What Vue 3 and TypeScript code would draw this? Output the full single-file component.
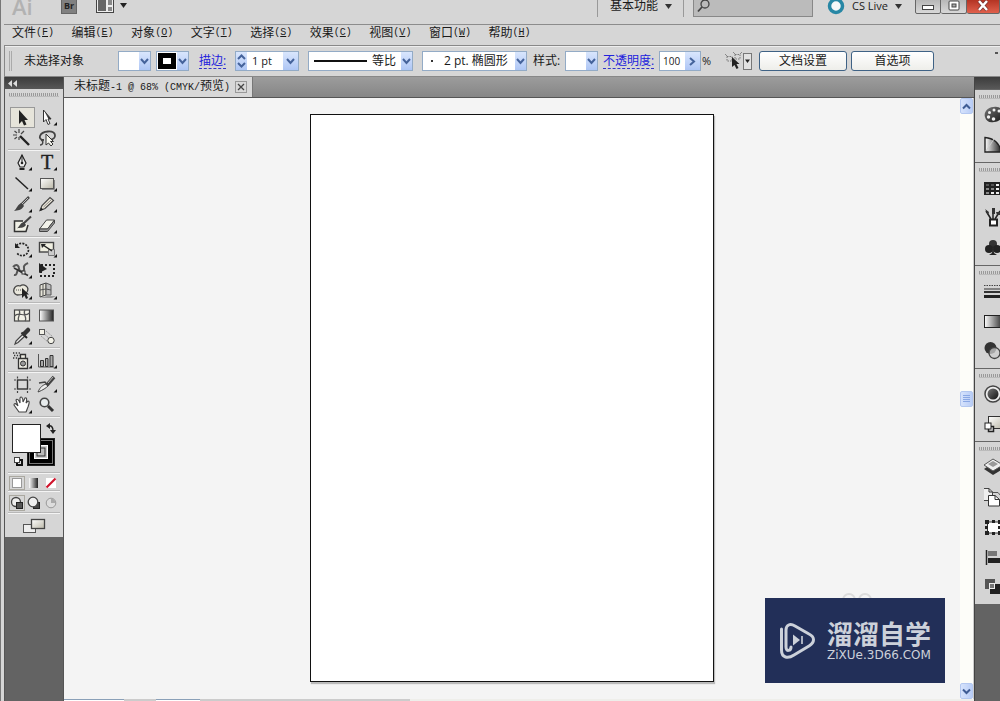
<script setup lang="ts">
import { ref } from 'vue'

interface Tool {
  name: string
  art: string
  more?: boolean
}

const menus = [
  ['文件', 'F'], ['编辑', 'E'], ['对象', 'O'], ['文字', 'T'], ['选择', 'S'],
  ['效果', 'C'], ['视图', 'V'], ['窗口', 'W'], ['帮助', 'H'],
]

const toolGroups: Tool[][] = [
  [
    { name: '选择工具', art: '<path d="M9 3V17L12 14L14 18.500L16.500 17.500L14.500 13H18Z" fill="#222"/>' },
    { name: '直接选择工具', more: true, art: '<path d="M8.500 3V15L11 12.500L13 17.500L15 16.500L13 12H16Z" fill="#fff" stroke="#333"/><path d="M13.500 12H16.500L10 5.500Z" fill="#333"/>' },
    { name: '魔棒工具', art: '<path d="M10 8L19 17" stroke="#222" stroke-width="2.400"/><path d="M9 1V5M9 9V12M3 7H7M11 6L14 3M4.500 3L7 5M4.500 11L7 9" stroke="#444" stroke-width="1.200"/>' },
    { name: '套索工具', art: '<path d="M9 12C2 12 4 4 13 3.500C22 3 22 11 15 12" fill="none" stroke="#444" stroke-width="1.800"/><path d="M6 12C9 13 8 17 5 17" fill="none" stroke="#444" stroke-width="1.400"/><path d="M11 6V17L13.500 15L16 18L18 16L15.500 13.500H18.500Z" fill="#f5f5ee" stroke="#333"/>' },
  ],
  [
    { name: '钢笔工具', more: true, art: '<path d="M12 3L8 11L10 15H14L16 11Z" fill="#eee" stroke="#222" stroke-width="1.200"/><path d="M12 3V10" stroke="#222"/><circle cx="12" cy="11" r="1.300" fill="#222"/><path d="M9.500 17H14.500" stroke="#222" stroke-width="2"/>' },
    { name: '文字工具', more: true, art: '<text x="12" y="17" text-anchor="middle" font-family="Liberation Serif, serif" font-size="20" fill="#222" stroke="#222" stroke-width=".4">T</text>' },
    { name: '直线段工具', more: true, art: '<path d="M5.500 4.500L18 16" stroke="#222" stroke-width="1.500"/>' },
    { name: '矩形工具', more: true, art: '<rect x="5.500" y="5.500" width="13" height="10" fill="url(#face)" stroke="#555"/><path d="M19.500 7V16.500H7" fill="none" stroke="#888"/>' },
    { name: '画笔工具', more: true, art: '<path d="M19 3L11 11" stroke="#444" stroke-width="2.500"/><path d="M12 9L14 12C11 17 8 16 4 17C7 15 7 10 12 9Z" fill="#444"/><path d="M18 4L12 10" stroke="#ddd" stroke-width=".8"/>' },
    { name: '铅笔工具', more: true, art: '<path d="M5 16.500L7 11.500L15 3.500L18.500 6.500L10 14.500Z" fill="#eee8da" stroke="#444" stroke-width="1.200"/><path d="M5 17L6 13.500L8.500 15.500Z" fill="#222"/><path d="M8.500 13L17 5" stroke="#888"/>' },
    { name: '斑点画笔工具', art: '<path d="M13 6H4.500V16.500H16L18 10" fill="#f0f0e6" stroke="#333" stroke-width="1.500"/><path d="M21 1.500L13 9" stroke="#444" stroke-width="2"/><path d="M14 7L16 10C13 14 10 12 7 13.500C10 11 10 8 14 7Z" fill="#444"/>' },
    { name: '橡皮擦工具', more: true, art: '<path d="M4.500 14L11.500 5H19.500L12.500 14Z" fill="#f2f2ea" stroke="#444"/><path d="M4.500 14V16.500H12.500L19.500 8V5L12.500 14Z" fill="#999" stroke="#444"/>' },
  ],
  [
    { name: '旋转工具', more: true, art: '<path d="M6.500 6.500C10 2.500 18 4 18.500 11C18 17 10 18.500 7 14" fill="none" stroke="#222" stroke-width="1.700" stroke-dasharray="2 1.200"/><path d="M5 4V9H10Z" fill="#222"/>' },
    { name: '比例缩放工具', more: true, art: '<rect x="4.500" y="3.500" width="14" height="9.500" fill="#efeee0" stroke="#444" stroke-width="1.400"/><path d="M13.500 10.500H19.500V16.500H13.500Z" fill="#ccc" stroke="#777"/><path d="M8 6L17 12" stroke="#222" stroke-width="1.500"/><path d="M6 5H11L7 9Z" fill="#222"/>' },
    { name: '变形工具', more: true, art: '<path d="M3 7C7 3 9 6 9 9C10 13 15 12 14 8C13 5 16 4 18 3" fill="none" stroke="#555" stroke-width="2"/><path d="M4 15C8 16 6 10 9 9" fill="none" stroke="#555" stroke-width="2"/><path d="M4 8L18 15.500" stroke="#333" stroke-width="1.500"/><rect x="12" y="11" width="3" height="3" fill="#eee" stroke="#333"/>' },
    { name: '自由变换工具', art: '<rect x="6" y="5" width="13" height="11" fill="none" stroke="#222" stroke-width="2" stroke-dasharray="2 2"/><path d="M4 3V13L12 9Z" fill="#222"/>' },
    { name: '形状生成器工具', more: true, art: '<path d="M7 14C1 12 4 3 10 5C14 2 20 6 17 11C15 14 11 14 7 14Z" fill="#e9e7dc" stroke="#444" stroke-width="1.300"/><path d="M6 9H13" stroke="#555" stroke-dasharray="1 1"/><path d="M12 7V17L14.500 14.500L16 18L18 17L16.500 13.500H19Z" fill="#222"/>' },
    { name: '透视网格工具', more: true, art: '<path d="M5 4L11 2V14L5 16Z" fill="#e6e4d8" stroke="#444"/><path d="M11 2L16 4V14H11Z" fill="#bbb" stroke="#555"/><path d="M8 3V15M5 9L11 8L16 9" fill="none" stroke="#555"/><path d="M5 17L17 17L21 15H12Z" fill="#999"/>' },
  ],
  [
    { name: '网格工具', art: '<rect x="4.500" y="5" width="15" height="11" fill="#f3f2e6" stroke="#444" stroke-width="1.200"/><path d="M9 5C12 9 6 13 9 16M15 5C12 9 18 13 15 16M4.500 11C9 6 14 13 19.500 8" fill="none" stroke="#555" stroke-width="1.200"/>' },
    { name: '渐变工具', art: '<rect x="4.500" y="5" width="14" height="11" fill="url(#ramp)" stroke="#555"/>' },
    { name: '吸管工具', more: true, art: '<path d="M13 8L6 15L5 18L8 16.500L15 10" fill="#eee" stroke="#444" stroke-width="1.200"/><path d="M11.500 6.500L17 12" stroke="#222" stroke-width="2"/><path d="M14 8L18 4" stroke="#333" stroke-width="4.500" stroke-linecap="round"/>' },
    { name: '混合工具', art: '<path d="M7 6L16 14M11 5L18 11M6 10L13 16" stroke="#999" stroke-dasharray="2 1"/><rect x="4.500" y="3.500" width="5" height="5" fill="#f3f2e8" stroke="#555"/><circle cx="16" cy="14.500" r="3.200" fill="#f3f2e8" stroke="#444"/>' },
  ],
  [
    { name: '符号喷枪工具', more: true, art: '<path d="M3 3H10M4 5.500H10M3 8H8" stroke="#333" stroke-width="1.300" stroke-dasharray="1.300 1.500"/><path d="M8.500 8.500H17.500V18.500H8.500ZM10.500 8V4.500H15.500V8" fill="#efeee4" stroke="#333" stroke-width="1.300"/><circle cx="13" cy="13.500" r="2.500" fill="#999" stroke="#333"/>' },
    { name: '柱形图工具', more: true, art: '<path d="M3.500 4V17H19" fill="none" stroke="#555"/><path d="M5.500 16.500V10.500H8.500V16.500ZM10.500 16.500V8.500H13V16.500ZM15 16.500V5.500H18V16.500Z" fill="#aaa" stroke="#333"/>' },
  ],
  [
    { name: '画板工具', art: '<rect x="7.500" y="6" width="10" height="9" fill="#d8d8d8" stroke="#333" stroke-width="1.400"/><path d="M7.500 2.500V4.500M17.500 2.500V4.500M7.500 17V19M17.500 17V19M4 6H6M19 6H21M4 15H6M19 15H21" stroke="#444" stroke-width="1.200"/>' },
    { name: '切片工具', more: true, art: '<path d="M3 18C5 13 8 11 11 10L13 12C11 14 8 16 3 18Z" fill="#eee" stroke="#444"/><path d="M4 9L10 8L13 12" fill="none" stroke="#444" stroke-width="1.400"/><path d="M12 11L19 3" stroke="#444" stroke-width="3.500"/><path d="M13 9L18 3" stroke="#bbb"/>' },
    { name: '抓手工具', more: true, art: '<path d="M9 17L4 10C4 8 6 8 8 11L6 5C7 3 9 5 10 8L10 3C11 1 13 2 13 7L15 3C17 2 17 5 16 8L18 6C20 6 19 9 18 12C17 14 17 15 16 17Z" fill="#fff" stroke="#444" stroke-width="1.100"/>' },
    { name: '缩放工具', art: '<circle cx="9.500" cy="7.500" r="4.300" fill="#e8eced" stroke="#444" stroke-width="1.600"/><path d="M13 11L18 16" stroke="#333" stroke-width="3"/>' },
  ],
]

const panels: Tool[][] = [
  [
    { name: '颜色', art: '<path d="M1 12C-1 6 6 1 13 2C20 3 22 10 19 13C16 14 15 17 10 17C5 18 2 16 1 12Z" fill="url(#dark)"/><g fill="#eee"><circle cx="4.500" cy="12" r="1.700"/><circle cx="5.500" cy="7.500" r="1.500"/><circle cx="10" cy="5" r="1.500"/><circle cx="15" cy="6" r="1.500"/><circle cx="9.500" cy="14" r="1.800"/></g>' },
    { name: '颜色参考', art: '<path d="M1 17V2.500C9 3 16 8 17 17Z" fill="url(#ramp)" stroke="#222" stroke-width="1.400"/><path d="M2 16L10 4" stroke="#ccc"/>' },
  ],
  [
    { name: '色板', art: '<rect x="0" y="4" width="20" height="13" fill="#222"/><path d="M2 6H5V8H2ZM7 6H10V8H7Z" fill="#555"/><path d="M12 6H15V8H12ZM12 10H15V12H12ZM7 14H10V16H7ZM12 14H15V16H12Z" fill="#eee"/><path d="M2 10H5V12H2ZM7 10H10V12H7ZM2 14H5V16H2Z" fill="#888"/>' },
    { name: '画笔', art: '<path d="M2 3L7 11M9 1V11M16 3L11 11" stroke="#222" stroke-width="1.500"/><path d="M1 1L5 4L4 7ZM8 0H11V6H8ZM12 4H17V7H13Z" fill="#333"/><rect x="6" y="11.500" width="7" height="6" fill="#fff" stroke="#222" stroke-width="2"/>' },
    { name: '符号', art: '<circle cx="9" cy="6" r="4" fill="#333"/><circle cx="5" cy="11" r="4" fill="#222"/><circle cx="13" cy="11" r="4" fill="#222"/><path d="M9 6L10 15L13 17H5L8 15Z" fill="#222"/>' },
  ],
  [
    { name: '描边', art: '<path d="M0 4.500H20" stroke="#444" stroke-dasharray="1.500 1"/><path d="M0 8H20" stroke="#333"/><path d="M0 11H20" stroke="#333" stroke-width="2"/><path d="M0 15.500H20" stroke="#222" stroke-width="3"/>' },
    { name: '渐变', art: '<rect x=".500" y="4.500" width="19" height="12" fill="url(#ramp)" stroke="#222"/>' },
    { name: '透明度', art: '<circle cx="6.500" cy="7" r="6" fill="#333"/><circle cx="10.500" cy="12" r="5.500" fill="#ccc" fill-opacity=".75" stroke="#444" stroke-width="1.300"/>' },
  ],
  [
    { name: '外观', art: '<circle cx="9" cy="10" r="8" fill="#eee" stroke="#444" stroke-width="1.500"/><circle cx="9" cy="10" r="5.500" fill="url(#dark)"/>' },
    { name: '图形样式', art: '<rect x="4.500" y="2.500" width="15" height="12" fill="url(#face)" stroke="#333"/><rect x="4.500" y="12.500" width="5" height="5" fill="#ddd" stroke="#222" stroke-width="1.500"/><rect x="1" y="9" width="6" height="6" fill="#fff" stroke="#222"/>' },
  ],
  [
    { name: '图层', art: '<path d="M0 12L9 6L19 12L9 18Z" fill="#333"/><path d="M0 8L9 2L19 8L9 14Z" fill="#eee" stroke="#555"/><path d="M4 7L9 4L14 7L9 10Z" fill="#999"/>' },
    { name: '画板', art: '<path d="M-.500 1.500H5L8.500 5V13.500H-.500Z" fill="#eee" stroke="#444"/><path d="M8 5.500H14L17 9" fill="none" stroke="#555"/><path d="M4.500 8.500H11L15.500 12.500V19H4.500Z" fill="#fff" stroke="#333"/><path d="M11 8.500V12.500H15.500M5 1.500V5H8.500" fill="none" stroke="#333"/>' },
    { name: '变换', art: '<rect x="3.500" y="5" width="13" height="11" fill="#fff" stroke="#333"/><path d="M1 3H5V7H1ZM8 3H11V6H8ZM14 3H18V7H14ZM1 9H4V12H1ZM14 9H18V12H14ZM1 14H5V18H1ZM8 15H11V18H8ZM14 14H18V18H14Z" fill="#222"/>' },
    { name: '对齐', art: '<path d="M2.500 3V18" stroke="#222" stroke-width="1.500"/><rect x="4" y="4" width="9" height="5" fill="#777"/><rect x="4" y="11" width="16" height="5" fill="#222"/>' },
    { name: '路径查找器', art: '<rect x="1" y="2" width="10" height="10" fill="#555"/><rect x="6" y="7" width="14" height="10" fill="#222"/><rect x="5.500" y="6.500" width="5" height="5" fill="#777" stroke="#eee"/>' },
  ],
]

const active = ref('选择工具')
const query = ref('')
const weight = ref('1 pt')
const opacity = ref('100')
</script>

<template>
  <div class="app">
    <svg class="defs" aria-hidden="true">
      <defs>
        <linearGradient id="ramp"><stop offset="0" stop-color="#fff" /><stop offset="1" stop-color="#222" /></linearGradient>
        <linearGradient id="face" x2="1" y2="1"><stop offset="0" stop-color="#fff" /><stop offset="1" stop-color="#bbb8a8" /></linearGradient>
        <linearGradient id="dark" x2="1" y2="1"><stop offset="0" stop-color="#777" /><stop offset="1" stop-color="#111" /></linearGradient>
      </defs>
    </svg>

    <header class="titlebar">
      <div class="title-row">
        <span class="logo">Ai</span>
        <button class="bridge">Br</button>
        <button class="arrange" aria-label="排列文档">
          <svg width="32" height="16" viewBox="0 0 32 16">
            <rect x=".5" y=".5" width="17" height="14" fill="#eee" stroke="#444" />
            <path d="M2 2H10V13H2Z" fill="#666" /><path d="M12 2H16V7H12ZM12 9H16V13H12Z" fill="#888" />
            <path d="M24 5H31L27.500 10Z" fill="#222" />
          </svg>
        </button>
        <span class="spacer"></span>
        <button class="workspace">基本功能<svg width="7" height="5"><path d="M0 0H7L3.500 5Z" fill="#333" /></svg></button>
        <label class="search">
          <svg width="14" height="14" viewBox="0 0 14 14"><circle cx="8" cy="5" r="4" fill="none" stroke="#444" stroke-width="1.300" /><path d="M5 8L1 12.500" stroke="#444" stroke-width="1.800" /></svg>
          <input v-model="query" aria-label="搜索" />
        </label>
        <button class="live">
          <svg width="18" height="18"><circle cx="9" cy="9" r="6.500" fill="#f4f8f9" stroke="#2787a5" stroke-width="3.500" /></svg>
          <span>CS Live</span>
          <svg width="7" height="5"><path d="M0 0H7L3.500 5Z" fill="#333" /></svg>
        </button>
        <div class="window-buttons">
          <button aria-label="最小化"><svg width="14" height="12"><rect x="1.500" y="5.500" width="11" height="4" fill="#fff" stroke="#444" /></svg></button>
          <button aria-label="还原"><svg width="14" height="12"><rect x="2" y="1" width="10" height="9" rx="1" fill="#fff" stroke="#444" /><rect x="5" y="4" width="4" height="3" fill="#aaa" stroke="#444" /></svg></button>
          <button class="close" aria-label="关闭"><svg width="14" height="12"><path d="M3 1L11 10M11 1L3 10" stroke="#733" stroke-width="4" /><path d="M3 1L11 10M11 1L3 10" stroke="#fff" stroke-width="2.500" /></svg></button>
        </div>
      </div>
    </header>

    <nav class="menubar">
      <button v-for="[label, key] in menus" :key="key">{{ label }}<span class="mono">(<u>{{ key }}</u>)</span></button>
    </nav>

    <section class="options">
      <span class="handle"></span>
      <span>未选择对象</span>
      <button class="combo swatch" aria-label="填色"><i class="chip"></i><b class="arrow"><svg width="9" height="7"><path d="M1 1L4.500 5L8 1" /></svg></b></button>
      <button class="combo swatch" aria-label="描边颜色"><i class="chip stroke"></i><b class="arrow"><svg width="9" height="7"><path d="M1 1L4.500 5L8 1" /></svg></b></button>
      <label class="link" for="weight">描边:</label>
      <div class="combo weight">
        <button class="spin" aria-label="调整粗细"><svg width="9" height="14"><path d="M1 5L4.500 1.500L8 5M1 9L4.500 12.500L8 9" /></svg></button>
        <input id="weight" v-model="weight" />
        <b class="arrow wide"><svg width="9" height="7"><path d="M1 1L4.500 5L8 1" /></svg></b>
      </div>
      <div class="combo profile">
        <i class="line"></i>
        <select aria-label="变量宽度配置文件"><option>等比</option></select>
        <b class="arrow"><svg width="9" height="7"><path d="M1 1L4.500 5L8 1" /></svg></b>
      </div>
      <div class="combo brush">
        <i class="dot"></i>
        <select aria-label="画笔定义"><option>2 pt. 椭圆形</option></select>
        <b class="arrow"><svg width="9" height="7"><path d="M1 1L4.500 5L8 1" /></svg></b>
      </div>
      <span>样式:</span>
      <button class="combo swatch" aria-label="图形样式"><i class="chip"></i><b class="arrow"><svg width="9" height="7"><path d="M1 1L4.500 5L8 1" /></svg></b></button>
      <label class="link" for="opacity">不透明度:</label>
      <div class="percent">
        <div class="combo opacity">
          <input id="opacity" v-model="opacity" />
          <b class="arrow wide"><svg width="7" height="9"><path d="M1 1L5 4.500L1 8" /></svg></b>
        </div>
        <span>%</span>
      </div>
      <button class="similar" aria-label="选择类似的对象">
        <svg width="28" height="20" viewBox="0 0 28 20">
          <path d="M3 5.500H8V10H3ZM11 3.500H16V8H11Z" fill="none" stroke="#777" stroke-dasharray="1.500 1" />
          <path d="M1 3L3 5M8 10L10 12M9 1L11 3M16 3L18 1" stroke="#888" />
          <path d="M8 6V16L10.500 14L12.500 18L14.500 17L12.500 13H15.500Z" fill="#222" />
          <rect x="19.500" y="2.500" width="8" height="16" fill="#e2e2e2" stroke="#777" /><path d="M21 8.500H26L23.500 12Z" fill="#222" />
        </svg>
      </button>
      <button class="push">文档设置</button>
      <button class="push">首选项</button>
      <i class="flyout"></i>
    </section>

    <div class="body">
      <aside class="toolbar">
        <div class="cap"><svg width="9" height="7"><path d="M4 0V7L0 3.500ZM9 0V7L5 3.500Z" fill="#ddd" /></svg></div>
        <div class="tools">
          <div class="grip"></div>
          <div v-for="(group, g) in toolGroups" :key="g" class="group">
            <button v-for="tool in group" :key="tool.name" :class="{ on: tool.name === active }" :aria-label="tool.name" @click="active = tool.name">
              <svg width="25" height="21" viewBox="0 0 25 21">
                <g v-html="tool.art"></g>
                <path v-if="tool.more" d="M22 15V18.500H18.500Z" fill="#111" />
              </svg>
            </button>
          </div>
          <div class="colors">
            <svg width="50" height="48" viewBox="0 0 50 48">
              <rect x="18.500" y="15.500" width="27" height="27" fill="#000" stroke="#222" />
              <rect x="20.500" y="17.500" width="23" height="23" fill="none" stroke="#777" />
              <rect x="25.500" y="22.500" width="13" height="13" fill="#ccc" stroke="#fff" />
              <rect x="28" y="25" width="8" height="8" fill="#bbb" stroke="#333" />
              <rect x="3.500" y="1.500" width="28" height="28" fill="#fff" stroke="#222" />
              <path d="M39 3C43 2 44 5 44 8" fill="none" stroke="#222" stroke-width="1.400" /><path d="M41 0V6L37 3ZM41 7H47L44 11Z" fill="#222" />
              <rect x="8" y="37" width="5" height="5" fill="none" stroke="#111" stroke-width="2" /><rect x="5.500" y="34.500" width="5" height="5" fill="#fff" stroke="#444" />
            </svg>
          </div>
          <div class="modes paint">
            <button aria-label="颜色" class="on"><svg width="16" height="14"><rect x="3.500" y="2.500" width="9" height="9" fill="#fff" stroke="#999" /></svg></button>
            <button aria-label="渐变"><svg width="16" height="14"><rect x="3" y="2" width="9" height="10" fill="url(#ramp)" /></svg></button>
            <button aria-label="无"><svg width="16" height="14"><rect x="3" y="2" width="10" height="10" fill="#fff" /><path d="M3.500 11.500L12.500 2.500" stroke="#d0142c" stroke-width="2.200" /></svg></button>
          </div>
          <div class="modes draw">
            <button aria-label="正常绘图" class="on"><svg width="16" height="16"><circle cx="7" cy="7" r="4.500" fill="#eee" stroke="#444" stroke-width="1.300" /><rect x="7.500" y="7.500" width="6" height="6" fill="#555" stroke="#222" /></svg></button>
            <button aria-label="背面绘图"><svg width="16" height="16"><rect x="7.500" y="7.500" width="6" height="6" fill="#444" stroke="#222" /><circle cx="7" cy="7" r="4.800" fill="#eee" stroke="#444" stroke-width="1.300" /></svg></button>
            <button aria-label="内部绘图"><svg width="16" height="16"><circle cx="8" cy="8" r="4.800" fill="#ddd" stroke="#999" /><path d="M8 8H12.500A4.500 4.500 0 0 0 8 3.500Z" fill="#aaa" /></svg></button>
          </div>
          <div class="modes screen">
            <button aria-label="更改屏幕模式"><svg width="24" height="18"><rect x="1.500" y="7.500" width="12" height="8" fill="#eee" stroke="#555" /><rect x="9.500" y="2.500" width="13" height="9" fill="url(#face)" stroke="#444" stroke-width="1.300" /></svg></button>
          </div>
        </div>
      </aside>

      <main class="document">
        <div class="tabs">
          <div class="tab">
            <span>未标题<span class="mono">-1 @ 68% (CMYK/</span>预览<span class="mono">)</span></span>
            <button aria-label="关闭文档"><svg width="8" height="8"><path d="M1 1L7 7M7 1L1 7" stroke="#444" stroke-width="1.300" /></svg></button>
          </div>
        </div>
        <div class="view">
          <div class="canvas">
            <div class="artboard"></div>
            <div class="brand">
              <svg class="ghost" width="36" height="16"><circle cx="10" cy="8" r="6" /><circle cx="26" cy="8" r="6" /></svg>
              <svg class="mark" width="36" height="38" viewBox="0 0 36 38">
                <g fill="none" stroke="#ccd1da" stroke-linejoin="round" stroke-linecap="round">
                  <path d="M2.500 7V28C2.500 36 9 37 15 33L30 24C36 20 36 15 30 12L16 4C11 1 7 3 7 8V25C7 30 12 29 12 25" stroke-width="3" />
                </g>
                <path d="M14 12.500L21 18L14 23.500Z" fill="#ccd1da" /><path d="M23 14V22" stroke="#ccd1da" stroke-width="1.600" />
              </svg>
              <div class="brand-text"><strong>溜溜自学</strong><span>ZiXUe.3D66.COM</span></div>
            </div>
          </div>
          <div class="scrollbar">
            <button aria-label="向上滚动"><svg width="9" height="7"><path d="M1 5.500L4.500 2L8 5.500" /></svg></button>
            <i class="thumb"><svg width="9" height="9"><path d="M1 1.500H8M1 3.500H8M1 5.500H8M1 7.500H8" /></svg></i>
            <button aria-label="向下滚动"><svg width="9" height="7"><path d="M1 1.500L4.500 5L8 1.500" /></svg></button>
          </div>
        </div>
        <footer class="status"><i class="zoom"></i><i class="page"></i><i class="info"></i></footer>
      </main>

      <aside class="dock">
        <div class="cap"></div>
        <div class="panels">
          <div v-for="(group, g) in panels" :key="g" class="panel-group">
            <div class="grip"></div>
            <button v-for="panel in group" :key="panel.name" :aria-label="panel.name">
              <svg width="20" height="20" viewBox="0 0 20 20" v-html="panel.art"></svg>
            </button>
          </div>
        </div>
      </aside>
    </div>
  </div>
</template>

<style>
body {
  margin: 0;
}
</style>

<style scoped>
.app {
  display: flex;
  flex-direction: column;
  box-sizing: border-box;
  height: 100vh;
  overflow: hidden;
  padding-left: 3px;
  border-left: 1px solid #777;
  background: #d6d6d6;
  color: #1a1a1a;
  font: 12px/16px "Open Sans", "Noto Sans CJK SC", sans-serif;
}
.app * {
  box-sizing: border-box;
}
.defs {
  position: absolute;
  width: 0;
  height: 0;
}
svg {
  display: block;
  flex: none;
}
button, input, select {
  margin: 0;
  padding: 0;
  border: 0;
  background: none;
  color: inherit;
  font: inherit;
}
button {
  display: flex;
  align-items: center;
  justify-content: center;
}
input, select {
  min-width: 0;
  outline: 0;
  appearance: none;
}
.mono {
  font-family: "Liberation Mono", monospace;
  font-size: 10px;
  white-space: pre;
}

.titlebar {
  flex: none;
  height: 25px;
  overflow: hidden;
  border-bottom: 1px solid #8c8c8c;
}
.title-row {
  display: flex;
  align-items: center;
  height: 36px;
  margin-top: -12px;
  line-height: 12px;
}
.logo {
  width: 57px;
  padding-left: 8px;
  color: #b2b2b2;
  font: 600 22px/16px "Open Sans", sans-serif;
}
.bridge {
  width: 16px;
  height: 16px;
  margin-right: 19px;
  border: 1px solid #666;
  background: #808080;
  color: #222;
  font-size: 9px;
  font-weight: bold;
}
.spacer {
  flex: 1;
}
.workspace {
  gap: 7px;
  height: 22px;
  padding: 0 11px 0 12px;
  border: solid #999;
  border-width: 0 1px;
}
.search {
  display: flex;
  align-items: center;
  width: 120px;
  height: 22px;
  margin: 0 14px 0 9px;
  padding-left: 3px;
  border: 1px solid #888;
  background: #bbb;
}
.search input {
  flex: 1;
}
.live {
  gap: 7px;
  margin-right: 13px;
  font-size: 11px;
}
.window-buttons {
  display: flex;
  width: 85px;
  height: 16px;
}
.window-buttons button {
  width: 26px;
  border: 1px solid #666;
  border-left-width: 0;
  border-radius: 0 0 2px 2px;
  background: linear-gradient(#b5b5b5, #d8d8d8);
}
.window-buttons button:first-child {
  border-left-width: 1px;
}
.window-buttons .close {
  flex: 1;
  background: linear-gradient(#b03020, #e0604c);
}

.menubar {
  display: grid;
  grid-template-columns: repeat(9, 1fr);
  flex: none;
  width: 536px;
  height: 20px;
  padding-bottom: 4px;
  margin-left: 8px;
}
.menubar button {
  justify-content: flex-start;
}

.options {
  display: grid;
  grid-template-columns: 15px 94px 38px 43px 36px 73px 114px 111px 32px 38px 56px 65px 35px 92px 83px 1fr;
  align-items: center;
  justify-items: start;
  flex: none;
  height: 32px;
  padding-left: 4px;
  border: 1px solid #888;
  border-width: 1px 0 1px 1px;
  box-shadow: inset 0 1px #eee;
  white-space: nowrap;
}
.handle {
  width: 3px;
  height: 20px;
  border: solid #aaa;
  border-width: 0 1px;
}
.combo {
  display: flex;
  align-items: stretch;
  height: 20px;
  border: 1px solid #93abc6;
  background: #fff;
}
.swatch {
  width: 33px;
}
.chip {
  flex: 1;
}
.chip.stroke {
  align-self: stretch;
  margin: 1px;
  border: 5px solid #000;
  background: #fff;
}
.arrow, .spin {
  display: flex;
  align-items: center;
  justify-content: center;
  flex: none;
  width: 11px;
  background: linear-gradient(#d9e6fd, #aec6f5);
}
.arrow.wide {
  width: 15px;
}
.arrow svg, .spin svg {
  fill: none;
  stroke: #45639b;
  stroke-width: 2;
}
.link {
  border-bottom: 1px dashed #33c;
  color: #2222dd;
  line-height: 14px;
}
.weight {
  width: 64px;
}
.weight input {
  flex: 1;
  width: 10px;
  padding-left: 5px;
  font-size: 11px;
}
.profile, .brush {
  width: 105px;
}
.profile .line {
  align-self: center;
  width: 53px;
  height: 2px;
  margin: 0 5px;
  background: #111;
}
.profile select, .brush select {
  flex: 1;
}
.brush .dot {
  align-self: center;
  width: 2px;
  height: 2px;
  margin: 0 11px 0 8px;
  background: #333;
}
.percent {
  display: flex;
  align-items: center;
  gap: 1px;
  font-size: 11px;
}
.opacity {
  width: 42px;
}
.opacity input {
  flex: 1;
  width: 10px;
  padding-left: 3px;
  font-size: 10px;
}
.push {
  width: 88px;
  height: 20px;
  border: 1px solid #3f6285;
  border-radius: 3px;
  background: linear-gradient(#fff, #eeeeea);
}
.push + .push {
  width: 83px;
}
.flyout {
  justify-self: end;
  align-self: start;
  width: 3px;
  height: 2px;
  margin: 6px 2px;
  background: #555;
}

.body {
  display: flex;
  flex: 1;
  min-height: 0;
  border-left: 1px solid #555;
  background: #636363;
}
.cap {
  display: flex;
  align-items: center;
  height: 12px;
  padding-left: 3px;
  background: linear-gradient(#3c3c3c, #585858);
}
.toolbar {
  flex: none;
  width: 59px;
  border-right: 1px solid #555;
}
.tools {
  padding-top: 4px;
  background: #d6d6d6;
}
.grip {
  height: 4px;
  margin: 0 4px;
  background: repeating-linear-gradient(90deg, #999 0 1px, transparent 1px 2px);
  border-bottom: 1px solid #bbb;
}
.group {
  display: grid;
  grid-template-columns: 25px 25px;
  margin: 0 3px;
  padding: 1px 0 1px 2px;
  border-top: 1px solid #f4f4f4;
  box-shadow: 0 -1px #b8b8b8;
}
.grip + .group {
  padding-top: 10px;
  border: 0;
  box-shadow: none;
}
.group button {
  height: 21px;
}
.group .on {
  border: 1px solid #999;
  background: #e6e4da;
}
.group .on svg {
  margin: -1px;
}
.colors, .modes {
  display: flex;
  justify-content: center;
  margin: 0 3px;
  border-top: 1px solid #f4f4f4;
  box-shadow: 0 -1px #b8b8b8;
}
.colors {
  padding: 5px 0 2px;
}
.modes {
  align-items: center;
  gap: 1px;
}
.modes .on {
  outline: 1px solid #aaa8a0;
  outline-offset: -1px;
}
.paint {
  height: 18px;
}
.draw {
  height: 22px;
}
.screen {
  height: 24px;
}

.document {
  display: flex;
  flex: 1;
  flex-direction: column;
  min-width: 0;
}
.tabs {
  display: flex;
  flex: none;
  height: 21px;
  border-bottom: 1px solid #555;
  background: linear-gradient(#9c9c9c, #868686);
}
.tab {
  display: flex;
  align-items: center;
  gap: 5px;
  padding: 0 5px 0 10px;
  border-right: 1px solid #777;
  background: #d8d8d8;
  white-space: nowrap;
}
.tab button {
  width: 12px;
  height: 12px;
  border: 1px solid #999;
}
.view {
  display: flex;
  flex: 1;
  min-height: 0;
}
.canvas {
  position: relative;
  isolation: isolate;
  flex: 1;
  overflow: hidden;
  background: #f4f4f4;
}
.artboard {
  width: 45%;
  margin: 16px auto 0;
  border: 1px solid #111;
  aspect-ratio: 403 / 568;
  background: #fff;
  box-shadow: 1px 2px 1px #bbb;
}
.brand {
  position: absolute;
  right: 15px;
  bottom: 16px;
  display: flex;
  align-items: center;
  gap: 12px;
  width: 180px;
  height: 85px;
  padding-left: 14px;
  background: #222f58;
  color: #ccd1da;
}
.ghost {
  position: absolute;
  z-index: -1;
  top: -6px;
  left: 74px;
  fill: none;
  stroke: #dcdcdc;
  stroke-width: 2;
}
.brand-text {
  display: flex;
  flex-direction: column;
  padding-bottom: 4px;
}
.brand-text strong {
  font: 700 26px/32px "Noto Sans CJK SC", sans-serif;
}
.brand-text span {
  font: 12px/12px "DejaVu Sans", sans-serif;
}
.scrollbar {
  display: flex;
  flex: none;
  flex-direction: column;
  justify-content: space-between;
  width: 14px;
  border-right: 1px solid #ccc;
  background: #fdfdf9;
}
.scrollbar button, .thumb {
  display: flex;
  align-items: center;
  justify-content: center;
  width: 13px;
  height: 16px;
  border: 1px solid #b4c8f0;
  border-radius: 2px;
  background: linear-gradient(90deg, #d6e3fc, #b9cdf6);
}
.scrollbar svg {
  fill: none;
  stroke: #3e5c94;
  stroke-width: 2;
}
.thumb svg {
  stroke: #8aa8e4;
  stroke-width: 1;
}
.status {
  display: flex;
  flex: none;
  height: 2px;
  background: linear-gradient(90deg, #ccc 346px, #eeeeea 346px);
}
.status i {
  border-top: 1px solid #8aa0b8;
  background: #fff;
}
.status .zoom {
  width: 60px;
  margin-right: 32px;
}
.status .page {
  width: 44px;
}

.dock {
  flex: none;
  width: 26px;
  overflow: hidden;
  border-left: 1px solid #444;
}
.panels {
  background: #d4d4d4;
}
.panel-group {
  padding: 5px 0 2px;
  border-top: 1px solid #666;
}
.panel-group .grip {
  margin-right: 0;
  margin-bottom: 1px;
}
.panel-group button {
  width: 20px;
  height: 30px;
  margin-left: 9px;
}
</style>
